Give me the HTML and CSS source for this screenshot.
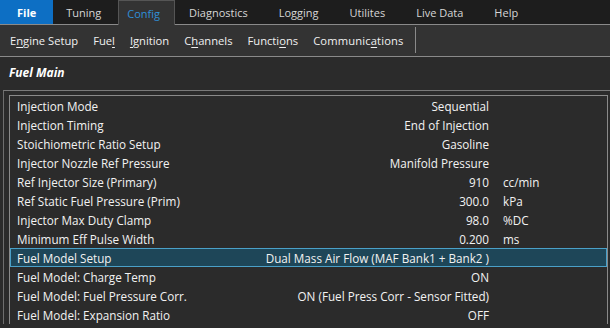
FILE: index.html
```html
<!DOCTYPE html>
<html lang="en">
<head>
    <meta charset="UTF-8">
    <title>Fuel Main</title>
    <link rel="stylesheet" href="styles.css">
</head>
<body>
    <div class="menubar">
        <div class="tab file">File</div>
        <div class="tab">Tuning</div>
        <div class="tab active">Config</div>
        <div class="tab">Diagnostics</div>
        <div class="tab">Logging</div>
        <div class="tab">Utilites</div>
        <div class="tab">Live Data</div>
        <div class="tab">Help</div>
    </div>

    <div class="toolbar">
        <div class="tool">E<u>n</u>gine Setup</div>
        <div class="tool">Fue<u>l</u></div>
        <div class="tool"><u>I</u>gnition</div>
        <div class="tool">C<u>h</u>annels</div>
        <div class="tool">Functi<u>o</u>ns</div>
        <div class="tool">Communic<u>a</u>tions</div>
    </div>

    <div class="page">
        <h1>Fuel Main</h1>
        <div class="frame">
            <div class="grid">
                <div class="row"><span class="name">Injection Mode</span><span class="value">Sequential</span><span class="unit"></span></div>
                <div class="row"><span class="name">Injection Timing</span><span class="value">End of Injection</span><span class="unit"></span></div>
                <div class="row"><span class="name">Stoichiometric Ratio Setup</span><span class="value">Gasoline</span><span class="unit"></span></div>
                <div class="row"><span class="name">Injector Nozzle Ref Pressure</span><span class="value">Manifold Pressure</span><span class="unit"></span></div>
                <div class="row"><span class="name">Ref Injector Size (Primary)</span><span class="value">910</span><span class="unit">cc/min</span></div>
                <div class="row"><span class="name">Ref Static Fuel Pressure (Prim)</span><span class="value">300.0</span><span class="unit">kPa</span></div>
                <div class="row"><span class="name">Injector Max Duty Clamp</span><span class="value">98.0</span><span class="unit">%DC</span></div>
                <div class="row"><span class="name">Minimum Eff Pulse Width</span><span class="value">0.200</span><span class="unit">ms</span></div>
                <div class="row selected"><span class="name">Fuel Model Setup</span><span class="value">Dual Mass Air Flow (MAF Bank1 + Bank2 )</span><span class="unit"></span></div>
                <div class="row"><span class="name">Fuel Model: Charge Temp</span><span class="value">ON</span><span class="unit"></span></div>
                <div class="row"><span class="name">Fuel Model: Fuel Pressure Corr.</span><span class="value">ON (Fuel Press Corr - Sensor Fitted)</span><span class="unit"></span></div>
                <div class="row"><span class="name">Fuel Model: Expansion Ratio</span><span class="value">OFF</span><span class="unit"></span></div>
            </div>
        </div>
    </div>
</body>
</html>
```

FILE: styles.css
```css
body {
    margin: 0;
    width: 610px;
    height: 328px;
    overflow: hidden;
    background-color: #2b2b2b;
    color: #f2f2f2;
    font-family: 'Open Sans', sans-serif;
    font-size: 11px;
}

.menubar {
    display: flex;
    height: 25px;
    background-color: #1d1d1d;
    border-bottom: 1px solid #8a8a8a;
    box-sizing: border-box;
}

.tab {
    display: flex;
    align-items: center;
    padding: 0 17px 0 14px;
    color: #d6d6d6;
}

.tab.file {
    background-color: #0d6fc4;
    color: #ffffff;
    font-weight: 700;
    padding: 0 17px;
    margin-right: -1px;
}

.tab.active {
    background-color: #333333;
    color: #2f8fd8;
    border: 1px solid #555555;
    border-bottom: none;
    margin-bottom: -1px;
    padding: 0 14px 0 8px;
}

.toolbar {
    display: flex;
    height: 32px;
    background-color: #333333;
    border-bottom: 1px solid #8a8a8a;
    box-sizing: border-box;
    padding-left: 10px;
    font-size: 11.2px;
    color: #f0f0f0;
}

.tool {
    display: flex;
    align-items: center;
    margin-right: 15px;
}

.tool:last-child {
    border-right: 1px solid #8a8a8a;
    padding-right: 11px;
    margin: 2px 0 3px;
    letter-spacing: 0.15px;
}

.tool u {
    text-underline-offset: 2px;
}

h1 {
    margin: 0;
    height: 33px;
    display: flex;
    align-items: center;
    padding: 0 0 2px 9px;
    font-size: 12px;
    font-style: italic;
    font-weight: 700;
    color: #ffffff;
    box-sizing: border-box;
}

.frame {
    margin-left: 3px;
    border-top: 1px solid #7a7a7a;
    border-left: 1px solid #6e6e6e;
    padding: 4px 0 0 5px;
    margin-right: -20px;
    border-right: 1px solid #6e6e6e;
}

.grid {
    width: 599px;
    border: 1px solid #8a8a8a;
    border-bottom: none;
    box-sizing: border-box;
}

.row {
    display: flex;
    align-items: center;
    height: 19px;
    box-sizing: border-box;
    border: 1px solid transparent;
    font-size: 11.7px;
}

.row.selected {
    background-color: #1e4658;
    border-color: #4aa0c8;
}

.name {
    width: 230px;
    padding-left: 6px;
}

.value {
    width: 242px;
    text-align: right;
}

.unit {
    padding-left: 14px;
}
```
